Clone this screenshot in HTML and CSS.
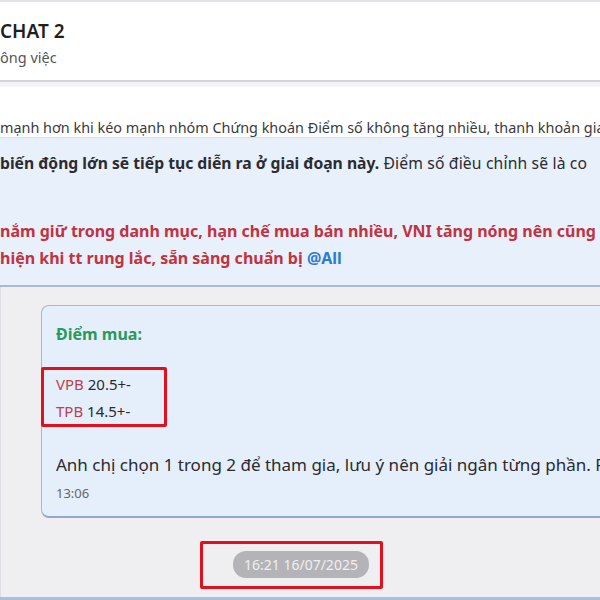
FILE: index.html
```html
<!DOCTYPE html>
<html lang="vi">
<head>
<meta charset="utf-8">
<link rel="stylesheet" href="styles.css">
</head>
<body>
<div class="page">
  <header class="header">
    <div class="title">CHAT 2</div>
    <div class="subtitle">ông việc</div>
  </header>
  <div class="band"></div>
  <div class="prev-msg">
    <p class="line"> mạnh hơn khi kéo mạnh nhóm Chứng khoán Điểm số không tăng nhiều, thanh khoản gia</p>
  </div>
  <section class="notice">
    <p class="line n1"><b>biến động lớn sẽ tiếp tục diễn ra ở giai đoạn này.</b> Điểm số điều chỉnh sẽ là co</p>
    <p class="line red r1">nắm giữ trong danh mục, hạn chế mua bán nhiều, VNI tăng nóng nên cũng</p>
    <p class="line red">hiện khi tt rung lắc, sẵn sàng chuẩn bị <span class="mention">@All</span></p>
  </section>
  <main class="chat">
    <div class="bubble">
      <p class="green">Điểm mua:</p>
      <div class="picks">
        <p class="pick"><span class="code">VPB</span> 20.5+-</p>
        <p class="pick"><span class="code">TPB</span> 14.5+-</p>
        <div class="mark mark-picks"></div>
      </div>
      <p class="line body">Anh chị chọn 1 trong 2 để tham gia, lưu ý nên giải ngân từng phần. P</p>
      <p class="time">13:06</p>
    </div>
    <div class="stamp-row">
      <span class="stamp">16:21 16/07/2025</span>
      <div class="mark mark-stamp"></div>
    </div>
  </main>
</div>
</body>
</html>
```
FILE: styles.css
```css
* { box-sizing: border-box; }
html, body { margin: 0; padding: 0; }
body {
  width: 600px;
  height: 600px;
  overflow: hidden;
  background: #efeef1;
  font-family: "Noto Sans", "Open Sans", sans-serif;
  color: #2b2b2f;
}
p { margin: 0; }
.page {
  height: 600px;
  border-bottom: 3px solid #a9bfdf;
  display: flex;
  flex-direction: column;
}
.header {
  background: #fff;
  border-top: 2px solid #e2e2e7;
  height: 82px;
  padding: 16px 0 0 0;
  border-bottom: 2px solid #d3d3da;
}
.title {
  font-size: 19px;
  font-weight: 600;
  color: #1f1f22;
  line-height: 26px;
}
.subtitle {
  margin-top: 4px;
  font-size: 14.5px;
  color: #555;
  line-height: 18px;
}
.band {
  height: 5px;
  background: #f4f4f7;
}
.line {
  white-space: nowrap;
  overflow: hidden;
}
.prev-msg {
  background: #fff;
  height: 50px;
  padding-top: 31px;
  font-size: 14.4px;
  line-height: 20px;
  color: #3a3a3e;
}
.notice {
  background: #e7f0fb;
  border-top: 1px solid #d3e1f1;
  border-bottom: 2px solid #aab9cc;
  height: 150px;
  padding: 12px 0 0 0;
  font-size: 15.7px;
  line-height: 27px;
  color: #2b2b30;
}
.n1 { letter-spacing: 0.15px; }
.notice b { font-weight: 700; letter-spacing: 0; }
.red {
  color: #c2323f;
  font-weight: 700;
  font-size: 16px;
}
.r1 { margin-top: 41px; }
.mention { color: #2e7bd2; }
.chat {
  flex: 1;
  padding: 18px 0 0 40px;
  border-left: 1px solid #dedde3;
}
.bubble {
  width: 600px;
  background: #e4effb;
  border: 1px solid #a6b9d2;
  border-bottom: 2px solid #92a9cc;
  border-radius: 8px;
  padding: 15px 0 14px 14px;
  font-size: 15px;
  color: #2a2a30;
}
.green {
  color: #2a9a5c;
  font-weight: 700;
  font-size: 16px;
  line-height: 26px;
}
.picks {
  position: relative;
  margin-top: 24px;
  width: 110px;
}
.pick {
  line-height: 27px;
}
.code { color: #c0404b; }
.body {
  margin-top: 27px;
  line-height: 26px;
  font-size: 17px;
}
.time {
  font-size: 13px;
  color: #666;
  margin-top: 6px;
  line-height: 18px;
}
.mark {
  position: absolute;
  border: 3px solid #e0101d;
  border-radius: 2px;
  pointer-events: none;
}
.mark-picks {
  left: -15px;
  top: -4px;
  width: 126px;
  height: 60px;
}
.stamp-row {
  position: relative;
  margin-top: 33px;
  margin-left: 192px;
  height: 30px;
}
.stamp {
  display: inline-block;
  background: #b4b4b8;
  color: #efeff1;
  font-size: 14px;
  line-height: 27px;
  height: 27px;
  padding: 0 11px;
  border-radius: 13px;
}
.mark-stamp {
  left: -33px;
  top: -10px;
  width: 183px;
  height: 48px;
}
```
